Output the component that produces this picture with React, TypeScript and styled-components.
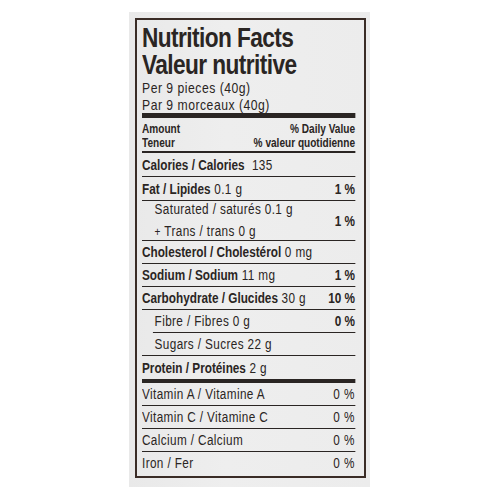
import React from "react";
import styled, { createGlobalStyle } from "styled-components";

const FONT = `"Liberation Sans", Arial, sans-serif`;
const INK = "#2a2523";
const SQUEEZE = 0.84;

const Global = createGlobalStyle`
  html, body { margin: 0; padding: 0; background: #ffffff; }
  body { font-family: ${FONT}; color: ${INK}; }
`;

const Package = styled.div`
  margin: 12px 0 0 129px;
  width: 241px;
  height: 475px;
  box-sizing: border-box;
  padding: 6px 4px 0 6px;
  background: linear-gradient(90deg, #e9e9e9 0%, #eeeeee 40%, #ececec 100%);
`;

const LabelBox = styled.div`
  box-sizing: border-box;
  height: 460px;
  border: 2px solid #3a2c26;
  padding: 5px 9px 0 5px;
  overflow: hidden;
`;

/* condensed type: the whole panel is set narrow, like Helvetica Condensed */
const Condensed = styled.div`
  width: ${100 / SQUEEZE}%;
  transform: scaleX(${SQUEEZE});
  transform-origin: 0 0;
  display: flex;
  flex-direction: column;
`;

const Title = styled.div`
  font-weight: 700;
  font-size: 27px;
  line-height: 27px;
  letter-spacing: -0.7px;
  white-space: nowrap;
`;

const ServingBlock = styled.div`
  padding-top: 1px;
  margin-bottom: -1px;
`;

const Serving = styled.div`
  font-size: 14.5px;
  line-height: 17px;
  letter-spacing: 0.6px;
  white-space: nowrap;
`;

const Rule = styled.div<{ $h: number }>`
  height: ${(p) => p.$h}px;
  background: ${INK};
`;

const Header = styled.div`
  display: grid;
  grid-template-columns: 1fr auto;
  font-size: 12px;
  font-weight: 700;
  line-height: 14px;
  padding: 4px 0 1px;
  border-bottom: 2px solid ${INK};
  white-space: nowrap;
`;

const Right = styled.span`
  text-align: right;
`;

const Row = styled.div<{ $indent?: boolean; $h?: number; $ruleIndent?: boolean; $noRule?: boolean }>`
  display: flex;
  align-items: center;
  justify-content: space-between;
  height: ${(p) => p.$h ?? 22}px;
  font-size: 14px;
  letter-spacing: 0.45px;
  white-space: nowrap;
  padding-left: ${(p) => (p.$indent ? 15 : 0)}px;
  ${(p) =>
    p.$noRule
      ? ""
      : p.$ruleIndent
      ? `background: linear-gradient(${INK}, ${INK}) no-repeat 13px 100% / calc(100% - 13px) 1px; padding-bottom: 1px;`
      : `border-bottom: 1px solid ${INK};`}
`;

const Label = styled.div`
  display: flex;
  flex-direction: column;
  line-height: 22px;
`;

const B = styled.b`
  font-weight: 700;
  letter-spacing: 0;
`;

const Plus = styled.span`
  font-size: 12px;
`;

const Pct = styled.span<{ $bold?: boolean }>`
  font-weight: ${(p) => (p.$bold ? 700 : 400)};
  letter-spacing: ${(p) => (p.$bold ? 0 : 0.6)}px;
`;

export default function App() {
  const vitamins: [string, string][] = [
    ["Vitamin A / Vitamine A", "0 %"],
    ["Vitamin C / Vitamine C", "0 %"],
    ["Calcium / Calcium", "0 %"],
    ["Iron / Fer", "0 %"],
  ];
  return (
    <>
      <Global />
      <Package>
        <LabelBox>
          <Condensed>
            <Title>Nutrition Facts</Title>
            <Title>Valeur nutritive</Title>
            <ServingBlock>
              <Serving>Per 9 pieces (40g)</Serving>
              <Serving>Par 9 morceaux (40g)</Serving>
            </ServingBlock>
            <Rule $h={5} />
            <Header>
              <span>Amount</span>
              <Right>% Daily Value</Right>
              <span>Teneur</span>
              <Right>% valeur quotidienne</Right>
            </Header>
            <Row $h={23}>
              <span>
                <B>Calories / Calories</B>&nbsp; 135
              </span>
            </Row>
            <Row $h={23}>
              <span>
                <B>Fat / Lipides</B> 0.1 g
              </span>
              <Pct $bold>1 %</Pct>
            </Row>
            <Row $indent $h={39}>
              <Label>
                <span>Saturated / saturés 0.1 g</span>
                <span>
                  <Plus>+</Plus> Trans / trans 0 g
                </span>
              </Label>
              <Pct $bold>1 %</Pct>
            </Row>
            <Row>
              <span>
                <B>Cholesterol / Cholestérol</B> 0 mg
              </span>
            </Row>
            <Row>
              <span>
                <B>Sodium / Sodium</B> 11 mg
              </span>
              <Pct $bold>1 %</Pct>
            </Row>
            <Row>
              <span>
                <B>Carbohydrate / Glucides</B> 30 g
              </span>
              <Pct $bold>10 %</Pct>
            </Row>
            <Row $indent $ruleIndent>
              <span>Fibre / Fibres 0 g</span>
              <Pct $bold>0 %</Pct>
            </Row>
            <Row $indent>
              <span>Sugars / Sucres 22 g</span>
            </Row>
            <Row $noRule $h={23}>
              <span>
                <B>Protein / Protéines</B> 2 g
              </span>
            </Row>
            <Rule $h={4} />
            {vitamins.map(([name, pct], i) => (
              <Row key={name} $noRule={i === vitamins.length - 1}>
                <span>{name}</span>
                <Pct>{pct}</Pct>
              </Row>
            ))}
          </Condensed>
        </LabelBox>
      </Package>
    </>
  );
}
